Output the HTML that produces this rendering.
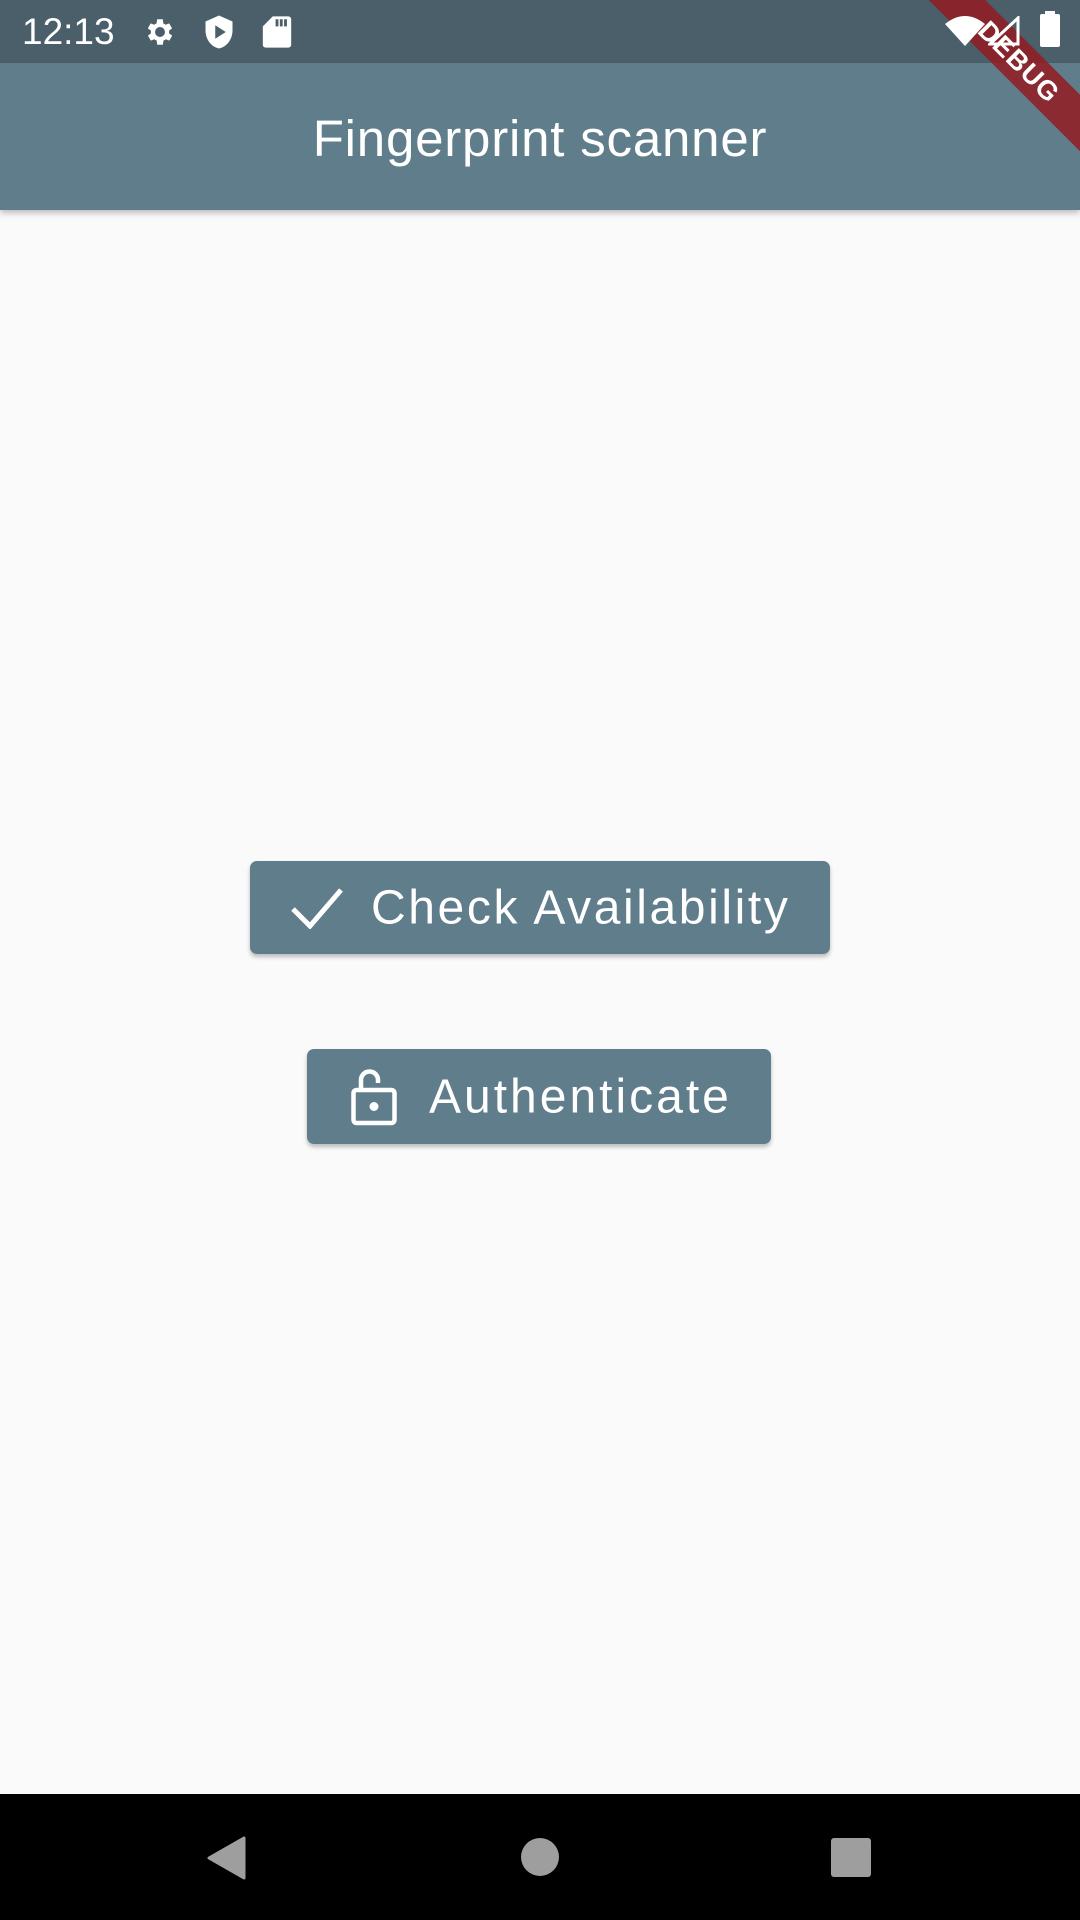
<!DOCTYPE html>
<html><head><meta charset="utf-8"><style>
*{margin:0;padding:0;box-sizing:border-box}
body{width:1080px;height:1920px;background:#fafafa;font-family:"Liberation Sans",sans-serif;position:relative;overflow:hidden}
.sb{position:absolute;left:0;top:0;width:1080px;height:63px;background:#4a5f6a;z-index:3}
.icons{position:absolute;left:0;top:0;width:1080px;height:63px;z-index:6}
.ab{position:absolute;left:0;top:63px;width:1080px;height:147px;background:#607d8b;box-shadow:0 3px 6px rgba(0,0,0,.25);z-index:2}
.title{position:absolute;left:0;right:0;top:51px;text-align:center;color:#fff;font-size:51px;line-height:50px;letter-spacing:0.8px}
.btn{position:absolute;background:#607d8b;border-radius:7px;box-shadow:0 3px 4px rgba(0,0,0,.25);color:#fff;font-size:48px}
.btn span{position:absolute;top:50%;transform:translateY(-50%);white-space:nowrap}
.nav{position:absolute;left:0;top:1794px;width:1080px;height:126px;background:#000}
.banner{position:absolute;right:-64px;top:42px;width:250px;height:40px;background:rgba(150,25,30,.82);transform:rotate(45deg);color:#fff;font-weight:bold;font-size:27px;text-align:center;line-height:40px;z-index:5;letter-spacing:1px}
</style></head><body>
<div class="sb"></div>
<div class="icons">
 <div style="position:absolute;left:22px;top:12px;color:#fff;font-size:37px;line-height:40px">12:13</div>
 <svg style="position:absolute;left:143px;top:15px" width="34" height="34" viewBox="0 0 24 24"><path fill="#fff" d="M19.4 13a7.5 7.5 0 000-2l2.1-1.6-2-3.5-2.5 1a7 7 0 00-1.7-1L15 3h-4l-.4 2.9a7 7 0 00-1.7 1l-2.5-1-2 3.5L6.6 11a7.5 7.5 0 000 2l-2.1 1.6 2 3.5 2.5-1a7 7 0 001.7 1L11 21h4l.4-2.9a7 7 0 001.7-1l2.5 1 2-3.5zM13 15.5a3.5 3.5 0 110-7 3.5 3.5 0 010 7z" transform="translate(-1 0)"/></svg>
 <svg style="position:absolute;left:203px;top:14px" width="32" height="36" viewBox="0 0 20 24"><path fill="#fff" d="M10 1L1 5v6c0 6 4 11 9 12 5-1 9-6 9-12V5z"/><path fill="#4a5f6a" d="M7.5 7.5v9l7-4.5z"/></svg>
 <svg style="position:absolute;left:262px;top:15px" width="30" height="34" viewBox="0 0 20 24"><path fill="#fff" d="M7 1h11a2 2 0 012 2v18a2 2 0 01-2 2H2a2 2 0 01-2-2V8z"/><path fill="#4a5f6a" d="M9 3h2v5H9zM12 3h2v5h-2zM15 3h2v5h-2z"/></svg>
 <svg style="position:absolute;left:945px;top:14px" width="40" height="32" viewBox="0 0 40 32"><path fill="#fff" d="M0 10Q20-6 40 10L20 32z"/></svg>
 <svg style="position:absolute;left:988px;top:16px" width="32" height="30" viewBox="0 0 32 30"><path fill="none" stroke="#fff" stroke-width="3" d="M30 2V28H2z"/></svg>
 <div style="position:absolute;left:1040px;top:14px;width:20px;height:33px;background:#fff;border-radius:2px"></div>
 <div style="position:absolute;left:1045px;top:11px;width:10px;height:4px;background:#fff"></div>
</div>
<div class="ab"><div class="title">Fingerprint scanner</div></div>
<div class="banner">DEBUG</div>
<div class="btn" style="left:250px;top:861px;width:580px;height:93px">
 <svg style="position:absolute;left:40px;top:26px" width="54" height="42" viewBox="0 0 54 42"><path fill="none" stroke="#fff" stroke-width="5" d="M3 22l17 17L51 3"/></svg>
 <span style="left:121px;letter-spacing:2.6px">Check Availability</span>
</div>
<div class="btn" style="left:307px;top:1049px;width:464px;height:95px">
 <svg style="position:absolute;left:44px;top:19px" width="46" height="58" viewBox="0 0 46 58"><path fill="none" stroke="#fff" stroke-width="4.5" d="M10 22V12a8.5 8.5 0 0117 0v3"/><rect x="2.5" y="22" width="41" height="33" rx="3" fill="none" stroke="#fff" stroke-width="4.5"/><circle cx="23" cy="38.5" r="4.5" fill="#fff"/></svg>
 <span style="left:122px;letter-spacing:3px">Authenticate</span>
</div>
<div class="nav">
 <svg style="position:absolute;left:206px;top:42px" width="40" height="44" viewBox="0 0 40 44"><path fill="#9e9e9e" d="M38 2V42L3 22z" stroke="#9e9e9e" stroke-width="3" stroke-linejoin="round"/></svg>
 <div style="position:absolute;left:521px;top:44px;width:38px;height:38px;border-radius:50%;background:#9e9e9e"></div>
 <div style="position:absolute;left:831px;top:44px;width:40px;height:39px;border-radius:3px;background:#9e9e9e"></div>
</div>
</body></html>
